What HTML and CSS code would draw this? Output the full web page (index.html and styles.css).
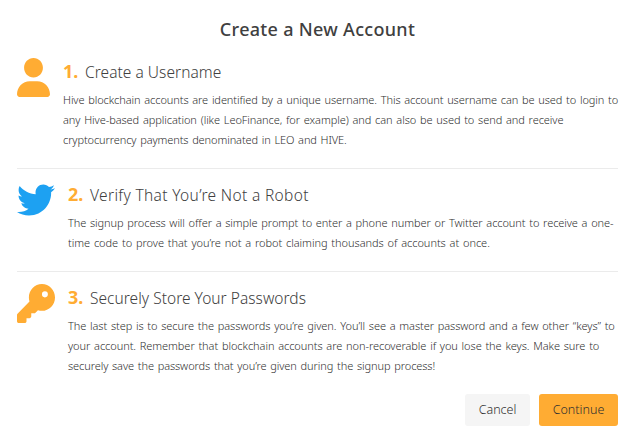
FILE: index.html
```html
<!DOCTYPE html>
<html lang="en">
<head>
<meta charset="utf-8">
<title>Create a New Account</title>
<link rel="stylesheet" href="styles.css">
</head>
<body>
<main class="dialog">
  <h1><span>Create a New Account</span></h1>
  <section class="step step-user">
    <svg class="icon user" viewBox="0 0 448 512" preserveAspectRatio="none"><path d="M224 256c70.7 0 128-57.31 128-128s-57.3-128-128-128C153.3 0 96 57.31 96 128S153.3 256 224 256zM274.7 304H173.3C77.61 304 0 381.6 0 477.3c0 19.14 15.52 34.67 34.66 34.67h378.7C432.5 512 448 496.5 448 477.3C448 381.6 370.4 304 274.7 304z"/></svg>
    <div class="content">
      <h2><b>1.</b><span class="t1">Create a Username</span></h2>
      <p><span class="l1">Hive blockchain accounts are identified by a unique username. This account username can be used to login to</span><span class="l2">any Hive-based application (like LeoFinance, for example) and can also be used to send and receive</span><span class="l3">cryptocurrency payments denominated in LEO and HIVE.</span></p>
    </div>
  </section>
  <section class="step">
    <svg class="icon twitter" viewBox="0 0 512 512"><path d="M459.37 151.716c.325 4.548.325 9.097.325 13.645 0 138.72-105.583 298.558-298.558 298.558-59.452 0-114.68-17.219-161.137-47.106 8.447.974 16.568 1.299 25.34 1.299 49.055 0 94.213-16.568 130.274-44.832-46.132-.975-84.792-31.188-98.112-72.772 6.498.974 12.995 1.624 19.818 1.624 9.421 0 18.843-1.3 27.614-3.573-48.081-9.747-84.143-51.98-84.143-102.985v-1.299c13.969 7.797 30.214 12.67 47.431 13.319-28.264-18.843-46.781-51.005-46.781-87.391 0-19.492 5.197-37.36 14.294-52.954 51.655 63.675 129.3 105.258 216.365 109.807-1.624-7.797-2.599-15.918-2.599-24.04 0-57.828 46.782-104.934 104.934-104.934 30.213 0 57.502 12.67 76.67 33.137 23.715-4.548 46.456-13.32 66.599-25.34-7.798 24.366-24.366 44.833-46.132 57.827 21.117-2.273 41.584-8.122 60.426-16.243-14.292 20.791-32.161 39.308-52.628 54.253z"/></svg>
    <div class="content">
      <h2><b>2.</b><span class="t2">Verify That You’re Not a Robot</span></h2>
      <p><span class="l4">The signup process will offer a simple prompt to enter a phone number or Twitter account to receive a one-</span><span class="l5">time code to prove that you’re not a robot claiming thousands of accounts at once.</span></p>
    </div>
  </section>
  <section class="step">
    <svg class="icon key" viewBox="0 0 512 512" preserveAspectRatio="none"><path d="M336 352c97.2 0 176-78.8 176-176S433.2 0 336 0S160 78.8 160 176c0 18.7 2.9 36.8 8.3 53.7L7 391c-4.5 4.5-7 10.6-7 17v80c0 13.3 10.7 24 24 24h80c13.3 0 24-10.7 24-24V448h40c13.3 0 24-10.7 24-24V384h40c6.4 0 12.5-2.5 17-7l33.3-33.3c16.9 5.4 35 8.3 53.7 8.3zM376 96a40 40 0 1 1 0 80 40 40 0 1 1 0-80z"/></svg>
    <div class="content">
      <h2><b>3.</b><span class="t3">Securely Store Your Passwords</span></h2>
      <p><span class="l6">The last step is to secure the passwords you’re given. You’ll see a master password and a few other “keys” to</span><span class="l7">your account. Remember that blockchain accounts are non-recoverable if you lose the keys. Make sure to</span><span class="l8">securely save the passwords that you’re given during the signup process!</span></p>
    </div>
  </section>
  <footer><button class="cancel">Cancel</button><button class="continue">Continue</button></footer>
</main>
</body>
</html>
```
FILE: styles.css
```css
* { box-sizing: border-box; }
body { margin: 0; background: #fff; color: #404040; font-family: "Noto Sans", "Open Sans", sans-serif; }
.dialog { width: 632px; height: 439px; padding: 15px 14px 0 17px; overflow: hidden; }
h1 { margin: 0; height: 29px; font-size: 18px; line-height: 28px; font-weight: 500; letter-spacing: .3px; text-align: center; color: #404040; }
.step { display: flex; gap: 13px; height: 103px; padding-top: 12px; border-top: 1px solid #ebebeb; }
.step-user { height: 124px; padding-top: 13px; border-top-color: transparent; }
.icon { flex: none; width: 38px; height: 39px; fill: #ffac33; }
.user { width: 33px; }
.twitter { height: 38px; fill: #1da1f2; }
.content { flex: 1; min-width: 0; }
h2 { display: flex; align-items: baseline; gap: 6px; margin: 0; height: 30px; font-size: 15.5px; line-height: 27px; font-weight: 300; white-space: nowrap; }
h2 b { width: 16px; font-size: 18px; font-weight: 700; color: #ffac33; }
.t1 { letter-spacing: .04px; }
.t2 { letter-spacing: .34px; }
.t3 { letter-spacing: .03px; }
p { margin: 2px 0 0; font-size: 11px; line-height: 20px; font-weight: 300; word-spacing: 1px; color: #303030; }
p span { display: block; white-space: nowrap; width: max-content; }
.l1 { letter-spacing: -.082px; }
.l2 { letter-spacing: -.068px; }
.l3 { letter-spacing: -.1px; }
.l4 { letter-spacing: -.08px; }
.l5 { letter-spacing: -.036px; }
.l6 { letter-spacing: -.07px; }
.l7 { letter-spacing: -.064px; }
.l8 { letter-spacing: -.084px; }
footer { display: flex; justify-content: flex-end; gap: 9px; margin-top: 20px; }
button { height: 32px; padding: 0; border: 0; border-radius: 3px; font: 300 12.5px/32px "Noto Sans", sans-serif; color: #303030; }
.cancel { width: 65px; background: #f5f5f5; }
.continue { width: 79px; background: #ffac33; }
```
